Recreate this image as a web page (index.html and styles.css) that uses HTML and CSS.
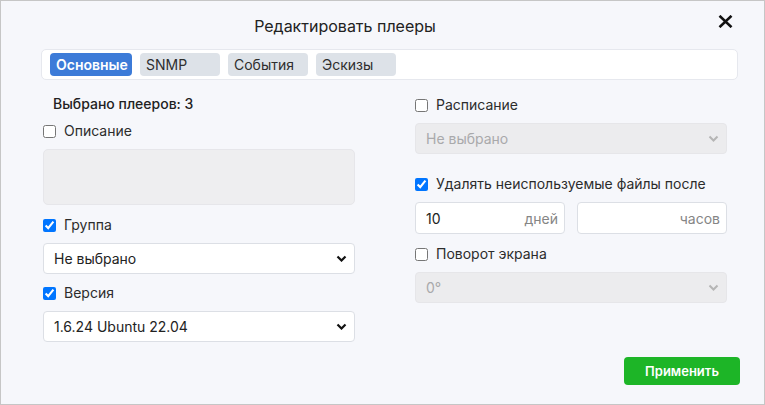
FILE: index.html
```html
<!DOCTYPE html>
<html lang="ru">
<head>
<meta charset="utf-8">
<title>Редактировать плееры</title>
<link rel="stylesheet" href="styles.css">
</head>
<body>
<div class="dialog">
  <div class="header">
    <div class="title">Редактировать плееры</div>
    <div class="close">
      <svg width="17" height="13" viewBox="0 0 17 13"><path d="M2.5 0.8L14.5 12.2M14.5 0.8L2.5 12.2" stroke="#111" stroke-width="2.6" fill="none"/></svg>
    </div>
  </div>
  <div class="tabs">
    <div class="tab active">Основные</div>
    <div class="tab">SNMP</div>
    <div class="tab">События</div>
    <div class="tab">Эскизы</div>
  </div>
  <div class="cols">
    <div class="col">
      <div class="row info">Выбрано плееров: 3</div>
      <label class="row check gap7"><input type="checkbox"><span>Описание</span></label>
      <div class="textarea"></div>
      <label class="row check gap10"><input type="checkbox" checked><span>Группа</span></label>
      <div class="select"><span>Не выбрано</span><svg width="11" height="7" viewBox="0 0 11 7"><path d="M1.5 1.5l4 4 4-4" stroke="#111" stroke-width="2.2" fill="none"/></svg></div>
      <label class="row check gap9"><input type="checkbox" checked><span>Версия</span></label>
      <div class="select"><span>1.6.24 Ubuntu 22.04</span><svg width="11" height="7" viewBox="0 0 11 7"><path d="M1.5 1.5l4 4 4-4" stroke="#111" stroke-width="2.2" fill="none"/></svg></div>
    </div>
    <div class="col right">
      <label class="row check"><input type="checkbox"><span>Расписание</span></label>
      <div class="select disabled"><span>Не выбрано</span><svg width="11" height="7" viewBox="0 0 11 7"><path d="M1.5 1.5l4 4 4-4" stroke="#b5b5b5" stroke-width="2" fill="none"/></svg></div>
      <label class="row check gap20"><input type="checkbox" checked><span>Удалять неиспользуемые файлы после</span></label>
      <div class="pair">
        <div class="input"><span class="val">10</span><span class="suffix">дней</span></div>
        <div class="input"><span class="val"></span><span class="suffix">часов</span></div>
      </div>
      <label class="row check gap10"><input type="checkbox"><span>Поворот экрана</span></label>
      <div class="select disabled"><span>0°</span><svg width="11" height="7" viewBox="0 0 11 7"><path d="M1.5 1.5l4 4 4-4" stroke="#b5b5b5" stroke-width="2" fill="none"/></svg></div>
    </div>
  </div>
  <div class="footer">
    <button class="apply">Применить</button>
  </div>
</div>
</body>
</html>
```
FILE: styles.css
```css
* { box-sizing: border-box; }
html, body { margin: 0; padding: 0; }
body {
  font-family: Inter, "Noto Sans", sans-serif;
  font-size: 14px;
  color: #2a2a2a;
}
.dialog {
  width: 765px;
  height: 405px;
  border: 1px solid #c6c6c6;
  background: #f6f7fb;
  padding: 0 26px 0 40px;
  display: flex;
  flex-direction: column;
}
.header {
  display: flex;
  padding-top: 14px;
}
.title {
  flex: 1;
  text-align: center;
  font-size: 16px;
  line-height: 22px;
  color: #222;
}
.close {
  width: 89px;
  display: flex;
  justify-content: flex-end;
  padding-right: 4px;
  height: 22px;
}
.tabs {
  margin-top: 12px;
  height: 31px;
  background: #fff;
  border: 1px solid #e6e8ee;
  border-radius: 5px;
  padding: 3px 8px;
  display: flex;
  gap: 8px;
}
.tab {
  width: 80px;
  flex: none;
  height: 23px;
  padding: 0 0 0 6px;
  border-radius: 4px;
  background: #dde2e8;
  color: #2e2e2e;
  font-size: 14px;
  line-height: 23px;
  white-space: nowrap;
}
.tab.active {
  width: 82px;
  padding-left: 6px;
  background: #3c7bd8;
  color: #fff;
  font-weight: 600;
}
.cols {
  display: grid;
  grid-template-columns: 312px 312px;
  column-gap: 60px;
  padding: 0 10px 0 2px;
  margin-top: 14px;
}
.col {
  display: flex;
  flex-direction: column;
}
.col.right { margin-top: 1px; }
.row {
  height: 20px;
  line-height: 20px;
  display: flex;
  align-items: center;
}
.info {
  padding-left: 10px;
  font-weight: 500;
  color: #222;
}
.check input {
  margin: 0 8px 0 0;
  width: 13px;
  height: 13px;
}
.check span { color: #2c2c2c; }
.gap7 { margin-top: 7px; }
.gap9 { margin-top: 9px; }
.gap10 { margin-top: 10px; }
.gap20 { margin-top: 20px; }
.textarea {
  margin-top: 8px;
  height: 56px;
  background: #eeeef0;
  border: 1px solid #e6e6ea;
  border-radius: 5px;
}
.select {
  margin-top: 8px;
  height: 31px;
  background: #fff;
  border: 1px solid #dcdfe5;
  border-radius: 4px;
  padding: 0 7px 0 10px;
  display: flex;
  align-items: center;
  justify-content: space-between;
  color: #222;
}
.select.disabled {
  background: #ececee;
  border-color: #e6e6e9;
  color: #a9a9ab;
}
.pair {
  margin-top: 8px;
  display: grid;
  grid-template-columns: 150px 150px;
  column-gap: 12px;
}
.input {
  height: 32px;
  background: #fff;
  border: 1px solid #dcdfe5;
  border-radius: 4px;
  padding: 0 6px 0 10px;
  display: flex;
  align-items: center;
  justify-content: space-between;
}
.val { color: #222; }
.suffix { color: #858585; }
.footer {
  margin-top: auto;
  margin-bottom: 19px;
  margin-right: -2px;
  display: flex;
  justify-content: flex-end;
}
.apply {
  width: 116px;
  height: 28px;
  border: none;
  border-radius: 4px;
  background: #1db527;
  color: #fff;
  font-family: Inter, "Noto Sans", sans-serif;
  font-size: 13px;
  font-weight: 600;
  padding: 0;
}
```
